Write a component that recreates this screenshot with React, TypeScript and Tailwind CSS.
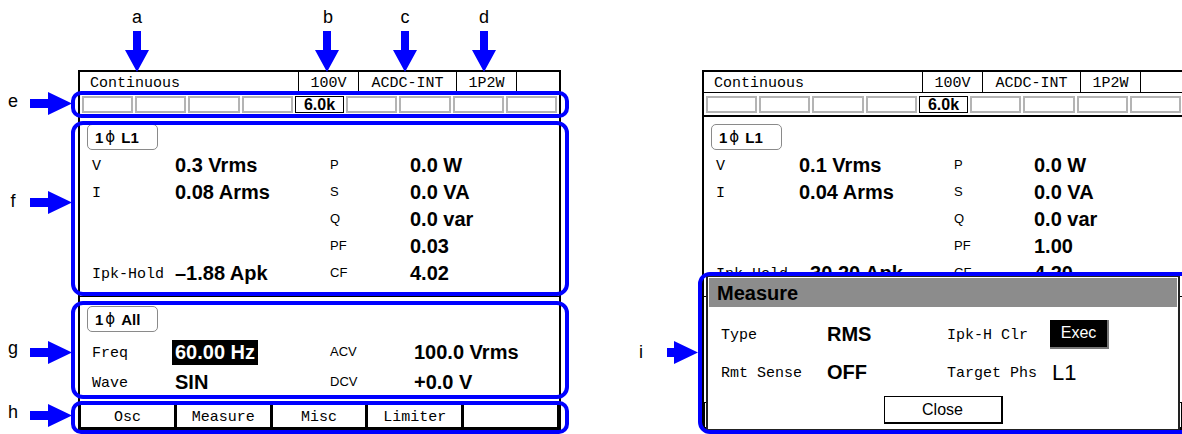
const mono = "font-['Liberation_Mono','DejaVu_Sans_Mono',monospace]";
const sans = "font-['Liberation_Sans',Arial,sans-serif]";

type ScreenData = {
  v: string;
  i: string;
  ipk: string;
  p: string;
  s: string;
  q: string;
  pf: string;
  cf: string;
};

const leftData: ScreenData = {
  v: '0.3 Vrms',
  i: '0.08 Arms',
  ipk: '–1.88 Apk',
  p: '0.0 W',
  s: '0.0 VA',
  q: '0.0 var',
  pf: '0.03',
  cf: '4.02',
};

const rightData: ScreenData = {
  v: '0.1 Vrms',
  i: '0.04 Arms',
  ipk: '–30.20 Apk',
  p: '0.0 W',
  s: '0.0 VA',
  q: '0.0 var',
  pf: '1.00',
  cf: '4.20',
};

function Phase({ label }: { label: string }) {
  return (
    <div className={`w-[71px] h-[26px] border-[1.5px] border-[#8a8a8a] rounded-[5px] flex items-center pl-[7px] text-[15px] font-bold leading-none ${sans}`}>
      1<span className="font-['DejaVu_Sans',sans-serif] font-normal text-[15px] ml-[2px] mr-[6px]">ϕ</span>
      {label}
    </div>
  );
}

function Screen({ data, covered, children }: { data: ScreenData; covered?: boolean; children?: React.ReactNode }) {
  const rows = [
    ['V', data.v, 'P', data.p],
    ['I', data.i, 'S', data.s],
    ['', '', 'Q', data.q],
    ['', '', 'PF', data.pf],
    ['Ipk-Hold', data.ipk, 'CF', data.cf],
  ];

  return (
    <div className="relative w-[483px] h-[361px] shrink-0 border-2 border-black bg-white flex flex-col text-black">
      {/* status bar */}
      <div className={`flex h-[21px] border-b border-black text-[15px] leading-none ${mono}`}>
        <div className="w-[218px] pl-[10px] pt-[3px] flex items-center">Continuous</div>
        <div className="w-[60px] pt-[3px] border-l border-black flex items-center justify-center">100V</div>
        <div className="w-[98px] pt-[3px] border-l border-black flex items-center justify-center">ACDC-INT</div>
        <div className="w-[60px] pt-[3px] border-l border-black flex items-center justify-center">1P2W</div>
        <div className="flex-1 border-l border-black"></div>
      </div>

      {/* tabs */}
      <div className="flex gap-[2px] px-[2px] pt-[3px] h-[24px] border-b-2 border-black">
        {Array.from({ length: 9 }).map((_, idx) =>
          idx === 4 ? (
            <div key={idx} className={`flex-1 h-[17px] border-[1.5px] border-black flex items-center justify-center text-[16px] font-bold leading-none ${sans}`}>
              6.0k
            </div>
          ) : (
            <div key={idx} className="flex-1 h-[17px] border-2 border-[#b4b4b4]"></div>
          )
        )}
      </div>

      {/* measurement */}
      <div className="h-[180px] border-b border-black px-[7px] pt-[7px]">
        <Phase label="L1" />
        <div className="grid grid-cols-[83px_155px_80px_1fr] pl-[5px] pt-[1px]">
          {rows.map((r, idx) => (
            <div key={idx} className="contents">
              <div className={`h-[27px] pt-[6px] flex items-center text-[15px] ${mono}`}>{r[0]}</div>
              <div className={`h-[27px] flex items-center text-[20px] font-bold ${sans}`}>{r[1]}</div>
              <div className={`h-[27px] flex items-center text-[13px] ${sans}`}>{r[2]}</div>
              <div className={`h-[27px] flex items-center text-[20px] font-bold ${sans}`}>{r[3]}</div>
            </div>
          ))}
        </div>
      </div>

      {/* settings */}
      <div className="h-[105px] px-[7px] pt-[9px]">
        {!covered && (
          <>
            <Phase label="All" />
            <div className="grid grid-cols-[80px_158px_84px_1fr] pl-[5px] mt-[5px]">
              <div className={`h-[30px] pt-[4px] flex items-center text-[15px] ${mono}`}>Freq</div>
              <div className="h-[30px] flex items-center">
                <span className={`bg-black text-white h-[25px] px-[3px] flex items-center text-[20px] font-bold ${sans}`}>60.00 Hz</span>
              </div>
              <div className={`h-[30px] flex items-center text-[13px] ${sans}`}>ACV</div>
              <div className={`h-[30px] flex items-center text-[20px] font-bold ${sans}`}>100.0 Vrms</div>
              <div className={`h-[30px] pt-[4px] flex items-center text-[15px] ${mono}`}>Wave</div>
              <div className={`h-[30px] flex items-center pl-[3px] text-[20px] font-bold ${sans}`}>SIN</div>
              <div className={`h-[30px] flex items-center text-[13px] ${sans}`}>DCV</div>
              <div className={`h-[30px] flex items-center text-[20px] font-bold ${sans}`}>+0.0 V</div>
            </div>
          </>
        )}
      </div>

      {/* function keys */}
      <div className={`flex h-[27px] text-[15px] leading-none ${mono}`}>
        {['Osc', 'Measure', 'Misc', 'Limiter', ''].map((k, idx) => (
          <div key={idx} className="flex-1 pt-[4px] border border-black border-r-2 border-b-2 flex items-center justify-center">
            {covered ? '' : k}
          </div>
        ))}
      </div>

      {children}
    </div>
  );
}

function MeasureDialog() {
  return (
    <div className="absolute left-[2px] top-[203px] w-[474px] h-[156px] bg-white border-2 border-[#222] flex flex-col">
      <div className={`h-[29px] mx-[1px] mt-[1px] bg-[#8c8c8c] flex items-center pl-[8px] text-[20px] font-bold ${sans}`}>Measure</div>
      <div className="grid grid-cols-[106px_120px_103px_1fr] pl-[13px] pt-[8px]">
        <div className={`h-[38px] pt-[4px] flex items-center text-[15px] ${mono}`}>Type</div>
        <div className={`h-[38px] flex items-center text-[20px] font-bold ${sans}`}>RMS</div>
        <div className={`h-[38px] pt-[4px] flex items-center text-[15px] ${mono}`}>Ipk-H Clr</div>
        <div className="h-[38px] flex items-center">
          <div className={`w-[59px] h-[29px] bg-black text-white border-r-2 border-b-2 border-[#777] flex items-center justify-center text-[16px] ${sans}`}>Exec</div>
        </div>
        <div className={`h-[38px] pt-[4px] flex items-center text-[15px] ${mono}`}>Rmt Sense</div>
        <div className={`h-[38px] flex items-center text-[20px] font-bold ${sans}`}>OFF</div>
        <div className={`h-[38px] pt-[4px] flex items-center text-[15px] ${mono}`}>Target Phs</div>
        <div className={`h-[38px] flex items-center pl-[2px] text-[22px] ${sans}`}>L1</div>
      </div>
      <div className="flex justify-center mt-[5px]">
        <div className={`w-[119px] h-[28px] border border-black border-r-2 border-b-2 flex items-center justify-center text-[16px] ${sans}`}>Close</div>
      </div>
    </div>
  );
}

function DownArrow({ x }: { x: number }) {
  return (
    <svg className="absolute top-[31px]" style={{ left: x - 12 }} width="24" height="41" viewBox="0 0 24 41">
      <polygon points="8,0 16,0 16,19 24,19 12,41 0,19 8,19" fill="#0000ff" />
    </svg>
  );
}

function RightArrow({ x, y, shaft = 18 }: { x: number; y: number; shaft?: number }) {
  const w = shaft + 24;
  return (
    <svg className="absolute" style={{ left: x, top: y - 11.5 }} width={w} height="23" viewBox={`0 0 ${w} 23`}>
      <polygon points={`0,7 ${shaft},7 ${shaft},0 ${w},11.5 ${shaft},23 ${shaft},16 0,16`} fill="#0000ff" />
    </svg>
  );
}

function Letter({ ch, x, y }: { ch: string; x: number; y: number }) {
  return (
    <div className={`absolute w-[20px] text-center text-[18px] leading-none ${sans}`} style={{ left: x - 10, top: y }}>
      {ch}
    </div>
  );
}

export default function App() {
  return (
    <div className="relative w-[1182px] h-[434px] overflow-hidden bg-white text-black">
      <div className="flex gap-[141px] pl-[78px] pt-[70px]">
        <Screen data={leftData} />
        <Screen data={rightData} covered>
          <MeasureDialog />
        </Screen>
      </div>

      {/* callout rings */}
      <div className="absolute left-[71px] top-[91px] w-[498px] h-[27px] border-4 border-[#0000ff] rounded-[10px]"></div>
      <div className="absolute left-[71px] top-[121px] w-[498px] h-[175px] border-4 border-[#0000ff] rounded-[12px]"></div>
      <div className="absolute left-[71px] top-[301px] w-[498px] h-[98px] border-4 border-[#0000ff] rounded-[12px]"></div>
      <div className="absolute left-[71px] top-[401px] w-[498px] h-[33px] border-4 border-[#0000ff] rounded-[10px]"></div>
      <div className="absolute left-[698px] top-[272px] w-[500px] h-[162px] border-4 border-[#0000ff] rounded-[12px]"></div>

      {/* callout letters and arrows */}
      <Letter ch="a" x={137} y={8} />
      <Letter ch="b" x={328} y={8} />
      <Letter ch="c" x={405} y={8} />
      <Letter ch="d" x={484} y={8} />
      <DownArrow x={137} />
      <DownArrow x={327} />
      <DownArrow x={405} />
      <DownArrow x={484} />

      <Letter ch="e" x={13} y={92} />
      <Letter ch="f" x={13} y={192} />
      <Letter ch="g" x={13} y={339} />
      <Letter ch="h" x={13} y={403} />
      <Letter ch="i" x={641} y={343} />
      <RightArrow x={30} y={103} />
      <RightArrow x={30} y={202} />
      <RightArrow x={30} y={352} />
      <RightArrow x={30} y={415} />
      <RightArrow x={667} y={352} shaft={7} />
    </div>
  );
}
